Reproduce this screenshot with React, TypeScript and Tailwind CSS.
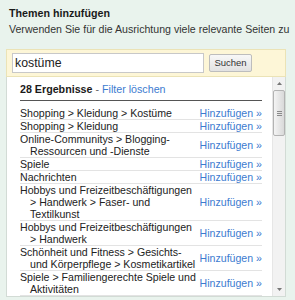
import React from "react";

const rows: string[][] = [
  ["Shopping > Kleidung > Kostüme"],
  ["Shopping > Kleidung"],
  ["Online-Communitys > Blogging-", "Ressourcen und -Dienste"],
  ["Spiele"],
  ["Nachrichten"],
  ["Hobbys und Freizeitbeschäftigungen", "> Handwerk > Faser- und", "Textilkunst"],
  ["Hobbys und Freizeitbeschäftigungen", "> Handwerk"],
  ["Schönheit und Fitness > Gesichts-", "und Körperpflege > Kosmetikartikel"],
  ["Spiele > Familiengerechte Spiele und", "Aktivitäten"],
];

export default function App() {
  return (
    <div
      className="w-[295px] h-[300px] overflow-hidden bg-[#e9f3ed] text-[#222]"
      style={{ fontFamily: '"Liberation Sans", Arial, sans-serif' }}
    >
      <div className="pt-[7px] pl-[9px]">
        <div className="text-[10.7px] leading-[13px] font-bold text-[#1a1a1a]">Themen hinzufügen</div>
        <div className="mt-[3px] text-[10.6px] leading-[13px] text-[#333] whitespace-nowrap">
          Verwenden Sie für die Ausrichtung viele relevante Seiten zu
        </div>
      </div>

      <div className="mt-[13px] ml-[6px] w-[280px] h-[28px] bg-[#fdf6d7] border border-[#ebe3b6] flex items-center pl-[5px]">
        <div className="w-[192px] h-[20px] bg-white border border-[#c8c8c8] flex items-center pl-[2px] text-[12.3px] text-[#222]">
          kostüme
        </div>
        <div className="ml-[5px] w-[43px] h-[18px] rounded-[2px] border border-[#bdbdbd] bg-gradient-to-b from-[#f8f8f8] to-[#e2e2e2] flex items-center justify-center text-[9.5px] text-[#333]">
          Suchen
        </div>
      </div>

      <div className="ml-[6px] w-[280px] h-[220px] bg-white border border-t-0 border-[#d2dbd5] flex">
        <div className="pl-[13px] w-[255px] flex flex-col overflow-hidden">
          <div className="pt-[6px] pb-[5px] border-b border-[#555] text-[10.7px] leading-[12px]">
            <span className="font-bold text-[#1a1a1a]">28 Ergebnisse</span>
            <span className="text-[#666]"> - </span>
            <span className="text-[#3c7bd0]">Filter löschen</span>
          </div>
          <div className="mt-[6px] flex flex-col">
            {rows.map((lines, i) => (
              <div key={i} className="flex items-center border-b border-[#e3e3e3] text-[10.6px] leading-[12px]">
                <div className="w-[178px] text-[#222]">
                  {lines.map((l, j) => (
                    <div key={j} className={j === 0 ? "whitespace-nowrap" : "whitespace-nowrap pl-[10px]"}>
                      {l}
                    </div>
                  ))}
                </div>
                <div className="flex-1 text-right whitespace-nowrap text-[#3c7bd0]">Hinzufügen »</div>
              </div>
            ))}
          </div>
        </div>

        <div className="ml-[10px] w-[13px] h-full bg-[#f2f2f2] border-l border-[#e6e6e6] flex flex-col items-center">
          <div className="h-[13px] w-full flex items-center justify-center">
            <svg width="5" height="3" viewBox="0 0 5 3"><path d="M0 3 L2.5 0 L5 3 Z" fill="#777" /></svg>
          </div>
          <div className="w-[12px] h-[46px] rounded-[2px] border border-[#b3b3b3] bg-gradient-to-r from-[#f4f4f4] to-[#d9d9d9] flex flex-col items-center justify-center gap-[1px]">
            <div className="w-[5px] h-px bg-[#8a8a8a]" />
            <div className="w-[5px] h-px bg-[#8a8a8a]" />
            <div className="w-[5px] h-px bg-[#8a8a8a]" />
          </div>
          <div className="flex-1" />
          <div className="h-[13px] w-full flex items-center justify-center">
            <svg width="5" height="3" viewBox="0 0 5 3"><path d="M0 0 L5 0 L2.5 3 Z" fill="#777" /></svg>
          </div>
        </div>
      </div>
    </div>
  );
}
